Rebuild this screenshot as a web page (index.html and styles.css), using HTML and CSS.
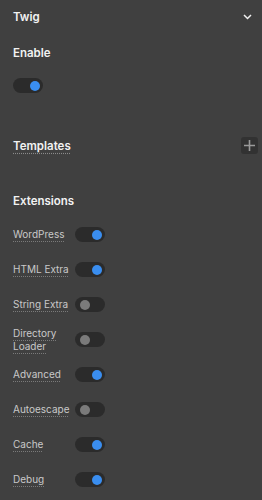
FILE: index.html
```html
<!DOCTYPE html>
<html lang="en">
<head>
  <meta charset="UTF-8">
  <meta name="viewport" content="width=device-width, initial-scale=1.0">
  <title>Twig</title>
  <link rel="stylesheet" href="styles.css">
</head>
<body>
  <div class="panel">
    <div class="panel-head">
      <span class="panel-title">Twig</span>
      <svg class="chevron" width="9" height="6" viewBox="0 0 9 6">
        <path d="M1 1 L4.5 4.5 L8 1" fill="none" stroke="#f0f0f0" stroke-width="1.5"/>
      </svg>
    </div>

    <div class="section section-enable">
      <div class="section-title">Enable</div>
      <span class="toggle on"></span>
    </div>

    <div class="section section-templates">
      <div class="templates-row">
        <span class="section-title underlined">Templates</span>
        <button class="add-btn">
          <svg width="11" height="11" viewBox="0 0 11 11">
            <path d="M5.5 0 V11 M0 5.5 H11" stroke="#9a9a9a" stroke-width="1.6"/>
          </svg>
        </button>
      </div>
    </div>

    <div class="section section-extensions">
      <div class="section-title">Extensions</div>
      <div class="ext-list">
        <div class="ext-row"><span class="ext-label"><span>WordPress</span></span><span class="toggle on"></span></div>
        <div class="ext-row"><span class="ext-label"><span>HTML Extra</span></span><span class="toggle on"></span></div>
        <div class="ext-row"><span class="ext-label"><span>String Extra</span></span><span class="toggle"></span></div>
        <div class="ext-row"><span class="ext-label"><span>Directory Loader</span></span><span class="toggle"></span></div>
        <div class="ext-row"><span class="ext-label"><span>Advanced</span></span><span class="toggle on"></span></div>
        <div class="ext-row"><span class="ext-label"><span>Autoescape</span></span><span class="toggle"></span></div>
        <div class="ext-row"><span class="ext-label"><span>Cache</span></span><span class="toggle on"></span></div>
        <div class="ext-row"><span class="ext-label"><span>Debug</span></span><span class="toggle on"></span></div>
      </div>
    </div>
  </div>
</body>
</html>
```

FILE: styles.css
```css
body {
  margin: 0;
  padding: 0;
  background-color: #404040;
  font-family: Inter, "Noto Sans", sans-serif;
  color: #f0f0f0;
}

.panel {
  padding: 0 4px 0 13px;
}

.panel-head {
  height: 34px;
  display: flex;
  align-items: center;
  justify-content: space-between;
  padding-right: 6px;
}

.panel-title,
.section-title {
  font-size: 11.5px;
  font-weight: 600;
  line-height: 16px;
  color: #f2f2f2;
}

.chevron {
  display: block;
}

.section-enable {
  margin-top: 11px;
}

.section-enable .toggle {
  margin-top: 17px;
}

.section-templates {
  margin-top: 44px;
}

.templates-row {
  display: flex;
  align-items: center;
  justify-content: space-between;
  height: 17px;
}

.underlined {
  text-decoration: underline dotted #8a8a8a;
  text-underline-offset: 3px;
}

.add-btn {
  width: 17px;
  height: 17px;
  padding: 0;
  border: none;
  border-radius: 3px;
  background-color: #323232;
  display: flex;
  align-items: center;
  justify-content: center;
}

.section-extensions {
  margin-top: 39px;
}

.ext-list {
  margin-top: 8px;
}

.ext-row {
  height: 35px;
  display: flex;
  align-items: center;
}

.ext-label {
  width: 62px;
  font-size: 10px;
  line-height: 13px;
  color: #c9c9c9;
}

.ext-label span {
  text-decoration: underline dotted #7a7a7a;
  text-underline-offset: 3px;
}

.toggle {
  display: block;
  position: relative;
  width: 30px;
  height: 15px;
  border-radius: 8px;
  background-color: #2b2b2b;
}

.toggle::after {
  content: "";
  position: absolute;
  top: 2.5px;
  left: 5px;
  width: 10px;
  height: 10px;
  border-radius: 50%;
  background-color: #7a7a7a;
}

.toggle.on::after {
  left: 17px;
  background-color: #3a8ef0;
}
```
